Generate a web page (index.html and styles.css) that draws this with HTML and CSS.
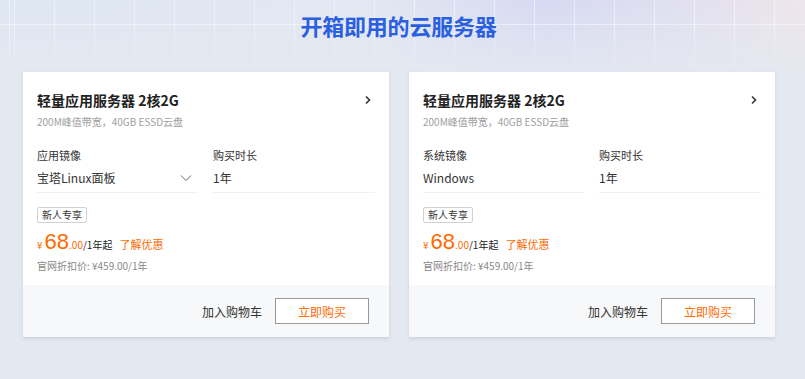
FILE: index.html
```html
<!DOCTYPE html>
<html lang="zh-CN">
<head>
<meta charset="utf-8">
<title>开箱即用的云服务器</title>
<link rel="stylesheet" href="styles.css">
</head>
<body>
<div class="page">
  <div class="bg-grid"></div>
  <h1 class="heading">开箱即用的云服务器</h1>
  <div class="cards">
    <div class="card">
      <div class="card-body">
        <div class="card-title">
          <span>轻量应用服务器 2核2G</span>
          <svg class="arrow" width="8" height="10" viewBox="0 0 8 10"><polyline points="2,1.5 5.5,5 2,8.5" fill="none" stroke="#333" stroke-width="1.6"/></svg>
        </div>
        <div class="card-sub">200M峰值带宽，40GB ESSD云盘</div>
        <div class="fields">
          <div class="field">
            <div class="label">应用镜像</div>
            <div class="value"><span>宝塔Linux面板</span>
              <svg class="caret" width="12" height="8" viewBox="0 0 12 8"><polyline points="1,1.5 6,6.5 11,1.5" fill="none" stroke="#666" stroke-width="1"/></svg>
            </div>
          </div>
          <div class="field">
            <div class="label">购买时长</div>
            <div class="value"><span>1年</span></div>
          </div>
        </div>
        <div class="tag">新人专享</div>
        <div class="price-row">
          <span class="yen">¥</span><span class="big">68</span><span class="dec">.00</span><span class="unit">/1年起</span>
          <a class="promo">了解优惠</a>
        </div>
        <div class="orig">官网折扣价: ¥459.00/1年</div>
      </div>
      <div class="card-foot">
        <span class="cart">加入购物车</span>
        <button class="buy">立即购买</button>
      </div>
    </div>
    <div class="card">
      <div class="card-body">
        <div class="card-title">
          <span>轻量应用服务器 2核2G</span>
          <svg class="arrow" width="8" height="10" viewBox="0 0 8 10"><polyline points="2,1.5 5.5,5 2,8.5" fill="none" stroke="#333" stroke-width="1.6"/></svg>
        </div>
        <div class="card-sub">200M峰值带宽，40GB ESSD云盘</div>
        <div class="fields">
          <div class="field">
            <div class="label">系统镜像</div>
            <div class="value"><span>Windows</span></div>
          </div>
          <div class="field">
            <div class="label">购买时长</div>
            <div class="value"><span>1年</span></div>
          </div>
        </div>
        <div class="tag">新人专享</div>
        <div class="price-row">
          <span class="yen">¥</span><span class="big">68</span><span class="dec">.00</span><span class="unit">/1年起</span>
          <a class="promo">了解优惠</a>
        </div>
        <div class="orig">官网折扣价: ¥459.00/1年</div>
      </div>
      <div class="card-foot">
        <span class="cart">加入购物车</span>
        <button class="buy">立即购买</button>
      </div>
    </div>
  </div>
</div>
</body>
</html>
```
FILE: styles.css
```css
* { box-sizing: border-box; }
html, body { margin: 0; padding: 0; }
body {
  width: 805px;
  height: 379px;
  overflow: hidden;
  background: #e4e8f0;
  font-family: "Noto Sans CJK SC", "Noto Sans", sans-serif;
  color: #333;
}
.page {
  position: relative;
  height: 379px;
  background:
    linear-gradient(to bottom, rgba(228,232,240,0) 0px, #e4e8f0 80px),
    linear-gradient(to right, #dfe7f2 0%, #e2e8f1 45%, #d6d9f3 68%, #e2e0f0 86%, #eee6ea 100%);
}
.bg-grid {
  position: absolute;
  left: 0; top: 0; right: 0;
  height: 75px;
  background-image:
    repeating-linear-gradient(to right, rgba(255,255,255,0.45) 0 1px, transparent 1px 40px),
    repeating-linear-gradient(to bottom, rgba(255,255,255,0.45) 0 1px, transparent 1px 40px);
  background-position: 14px 24px;
  -webkit-mask-image: linear-gradient(to bottom, #000 40%, transparent 100%);
  mask-image: linear-gradient(to bottom, #000 40%, transparent 100%);
}
.heading {
  position: relative;
  margin: 0;
  padding-top: 10px;
  padding-right: 8px;
  height: 72px;
  text-align: center;
  font-size: 22px;
  line-height: 30px;
  font-weight: 700;
  color: #2a5fe0;
  letter-spacing: -0.2px;
}
.cards {
  position: relative;
  display: flex;
  gap: 20px;
  padding-left: 23px;
}
.card {
  width: 366px;
  height: 265px;
  background: #fff;
  display: flex;
  flex-direction: column;
  box-shadow: 0 2px 3px rgba(160,170,190,0.35);
}
.card-body {
  padding: 18px 14px 0;
  flex: 1;
}
.card-title {
  display: flex;
  justify-content: space-between;
  align-items: center;
  height: 20px;
  font-size: 14px;
  font-weight: 700;
  color: #222;
  padding-right: 3px;
}
.card-sub {
  margin-top: 4px;
  font-size: 10px;
  line-height: 16px;
  color: #a0a0a0;
}
.fields {
  margin-top: 17px;
  display: grid;
  grid-template-columns: 161px 162px;
  column-gap: 15px;
}
.field {
  border-bottom: 1px solid #f0f1f3;
  padding-bottom: 6px;
}
.label {
  font-size: 11px;
  line-height: 16px;
  color: #333;
}
.value {
  margin-top: 7px;
  display: flex;
  justify-content: space-between;
  align-items: center;
  font-size: 12px;
  line-height: 16px;
  color: #333;
  padding-right: 6px;
}
.tag {
  display: inline-block;
  margin-top: 14px;
  height: 16px;
  padding: 0 4px;
  border: 1px solid #d0d0d0;
  border-radius: 2px;
  font-size: 10px;
  line-height: 14px;
  color: #333;
}
.price-row {
  margin-top: 5px;
  height: 26px;
  display: flex;
  align-items: baseline;
  color: #ff6a00;
  line-height: 26px;
}
.yen { font-size: 10px; margin-right: 2px; }
.big { font-size: 22px; font-family: "Liberation Sans", sans-serif; }
.dec { font-size: 10px; }
.unit { font-size: 10px; color: #222; }
.promo { font-size: 11px; margin-left: 7px; color: #ff6a00; }
.orig {
  margin-top: 3px;
  font-size: 10px;
  line-height: 16px;
  color: #888;
}
.card-foot {
  height: 52px;
  background: #f7f8f9;
  display: flex;
  justify-content: flex-end;
  align-items: center;
  gap: 13px;
  padding-right: 20px;
}
.cart {
  font-size: 12px;
  color: #333;
}
.buy {
  width: 94px;
  height: 26px;
  background: #fff;
  border: 1px solid #999;
  border-radius: 0;
  font-family: inherit;
  font-size: 12px;
  color: #ff6a00;
  padding: 0;
}
```
